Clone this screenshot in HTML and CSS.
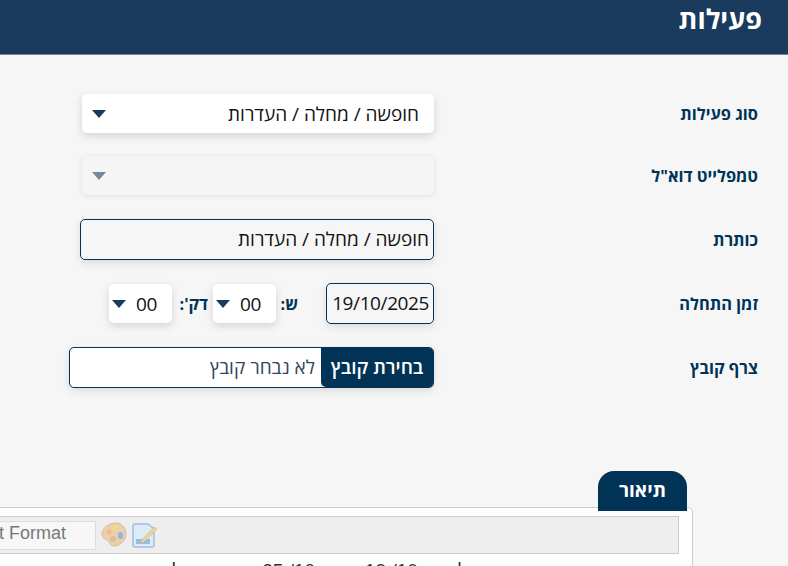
FILE: index.html
```html
<!DOCTYPE html>
<html lang="he" dir="rtl">
    <head>
        <meta charset="utf-8">
        <title>פעילות</title>
        <link rel="stylesheet" href="styles.css">
    </head>
    <body>
        <div class="header">
            <h1>פעילות</h1>
        </div>
        <div class="form">
            <div class="row">
                <label class="row-label">סוג פעילות</label>
                <div class="select wide">
                    <span>חופשה / מחלה / העדרות</span>
                    <i class="caret"></i>
                </div>
            </div>
            <div class="row">
                <label class="row-label">טמפלייט דוא"ל</label>
                <div class="select wide disabled">
                    <span></span>
                    <i class="caret"></i>
                </div>
            </div>
            <div class="row title-row">
                <label class="row-label">כותרת</label>
                <div class="input title-input">חופשה / מחלה / העדרות</div>
            </div>
            <div class="row">
                <label class="row-label">זמן התחלה</label>
                <div class="time-fields">
                    <div class="input date-input" dir="ltr">19/10/2025</div>
                    <b class="unit hour-unit">ש:</b>
                    <div class="select small">
                        <span>00</span>
                        <i class="caret"></i>
                    </div>
                    <b class="unit min-unit">דק':</b>
                    <div class="select small">
                        <span>00</span>
                        <i class="caret"></i>
                    </div>
                </div>
            </div>
            <div class="row">
                <label class="row-label">צרף קובץ</label>
                <div class="file">
                    <div class="file-button">בחירת קובץ</div>
                    <div class="file-name">לא נבחר קובץ</div>
                </div>
            </div>
        </div>
        <div class="description">
            <div class="tab">תיאור</div>
            <div class="editor-box">
                <div class="toolbar">
                    <svg class="tool-icon" viewBox="0 0 26 26">
                        <path d="M3 2h13l6 5v16a2 2 0 0 1-2 2H3a2 2 0 0 1-2-2V4a2 2 0 0 1 2-2z" fill="#dceaf7" stroke="#8db8e4" stroke-width="1.500"/>
                        <path d="M4 17h14v5H4z" fill="#86b5e4"/>
                        <path d="M9 19L22 5l3 2-13 13-4 1z" fill="#eccf8c" stroke="#c9aa68" stroke-width=".6"/>
                    </svg>
                    <svg class="tool-icon" viewBox="0 0 26 26">
                        <path d="M15 1C8 1 1 6 1 12c0 4 3 5 5 6 3 1 2 6 7 6 5 0 12-5 12-12C25 6 21 1 15 1z" fill="#e9cda6" stroke="#d3b48a"/>
                        <circle cx="8" cy="10" r="2.500" fill="#eeb07a"/>
                        <circle cx="14" cy="6" r="3" fill="#f3d66e"/>
                        <circle cx="12" cy="17" r="2.500" fill="#dcbb92" stroke="#c8a67a" stroke-width=".6"/>
                        <rect x="17" y="10" width="5" height="7" rx="2" fill="#86aedb"/>
                    </svg>
                    <div class="format-box" dir="ltr">Font Format</div>
                </div>
                <div class="editor-text">
                    <span class="mark-a">ל</span>
                    <span class="date-b" dir="ltr">19 /10</span>
                    <span class="date-a" dir="ltr">25 /10</span>
                    <span class="mark-b">ל</span>
                </div>
            </div>
        </div>
    </body>
</html>
```

FILE: styles.css
```css
:root {
    --c-navy: #003356;
    --c-head: #1a3a5e;
    --c-bg: #f6f6f6;
    --sh-field: 0 3px 8px #00000024;
    --font: "Open Sans", "Noto Sans", sans-serif;
}
html, body {
    margin: 0;
    padding: 0;
    height: 566px;
    overflow: hidden;
}

body {
    background-color: var(--c-bg);
    font-family: var(--font);
    font-size: 19px;
    color: #111;
}

.header {
    height: 55px;
    box-sizing: border-box;
    padding: 0 26px 0 0;
    background-color: var(--c-head);
    border-bottom: 1px solid #6d88a5;
}
.header h1 {
    margin: 0;
    font-size: 27px;
    line-height: 38px;
    font-weight: 700;
    color: #fff;
}

.form {
    padding: 39px 30px 0 0;
    display: flex;
    flex-direction: column;
    gap: 23px;
}
.row {
    display: flex;
    align-items: center;
    min-height: 39px;
}
.title-row {
    margin-top: 1px;
}
.row-label {
    width: 324px;
    flex-shrink: 0;
    font-size: 16.400px;
    font-weight: 700;
    color: var(--c-navy);
}

.select {
    display: flex;
    align-items: center;
    justify-content: space-between;
    box-sizing: border-box;
    height: 39px;
    background-color: #fff;
    border-radius: 5px;
    box-shadow: var(--sh-field);
}
.select.wide {
    width: 352px;
    padding: 0 15px 0 10px;
}
.select.small {
    width: 63px;
    padding: 0 15px 0 3px;
    letter-spacing: -.4px;
}
.select.disabled {
    background-color: #f5f5f5;
    box-shadow: 0 1px 5px #0000001a;
}
.caret {
    width: 0;
    height: 0;
    border-left: 7px solid transparent;
    border-right: 7px solid transparent;
    border-top: 8px solid var(--c-head);
}
.disabled .caret {
    border-top-color: #76879b;
}

.input {
    box-sizing: border-box;
    height: 41px;
    line-height: 39px;
    border: 1px solid var(--c-navy);
    border-radius: 5px;
    box-shadow: 0 3px 8px #0000001c;
}
.title-input {
    width: 354px;
    padding: 0 4px;
}

.time-fields {
    display: flex;
    align-items: center;
}
.date-input {
    width: 108px;
    padding: 0 4px;
    text-align: right;
    letter-spacing: -.4px;
}
.unit {
    font-size: 16.400px;
    color: var(--c-navy);
}
.hour-unit {
    width: 50px;
    padding-right: 28px;
    box-sizing: border-box;
}
.min-unit {
    width: 41px;
    padding-right: 5px;
    box-sizing: border-box;
}

.file {
    display: flex;
    box-sizing: border-box;
    width: 365px;
    height: 41px;
    background-color: #fff;
    border: 1px solid var(--c-navy);
    border-radius: 5px;
    box-shadow: 0 3px 8px #0000001c;
    overflow: hidden;
}
.file-button {
    width: 112px;
    background-color: var(--c-navy);
    color: #fff;
    font-size: 19px;
    font-weight: 600;
    line-height: 39px;
    text-align: center;
    border-radius: 0 0 0 5px;
}
.file-name {
    padding-right: 6px;
    line-height: 39px;
    color: #33475c;
}

.description {
    margin: 83px 95px 0 -40px;
}
.tab {
    position: relative;
    z-index: 1;
    width: 89px;
    height: 40px;
    margin-right: 6px;
    margin-bottom: -4px;
    background-color: var(--c-navy);
    border-radius: 16px 16px 0 0;
    color: #fff;
    font-size: 19px;
    font-weight: 700;
    line-height: 38px;
    text-align: center;
}
.editor-box {
    height: 70px;
    padding: 8px 13px 0 0;
    background-color: #fff;
    border: 1px solid #ccc;
    border-radius: 0 5px 0 0;
}
.toolbar {
    display: flex;
    align-items: center;
    justify-content: flex-end;
    gap: 5px;
    height: 36px;
    background-color: #eee;
    border: 1px solid #ccc;
}
.format-box {
    box-sizing: border-box;
    width: 134px;
    height: 29px;
    flex-shrink: 0;
    padding-right: 29px;
    border: 1px solid #ddd;
    background-color: #f7f7f7;
    color: #777;
    font-family: "Liberation Sans", sans-serif;
    font-size: 18px;
    line-height: 22px;
    text-align: right;
}
.tool-icon {
    width: 26px;
    height: 26px;
    flex-shrink: 0;
    opacity: .85;
}
.editor-text {
    display: flex;
    padding: 6px 211px 0 0;
    font-family: "Liberation Sans", sans-serif;
    font-size: 19px;
    color: #333;
}
.date-b {
    margin-right: 40px;
}
.date-a {
    margin-right: 50px;
}
.mark-b {
    margin-right: 80px;
}
```
